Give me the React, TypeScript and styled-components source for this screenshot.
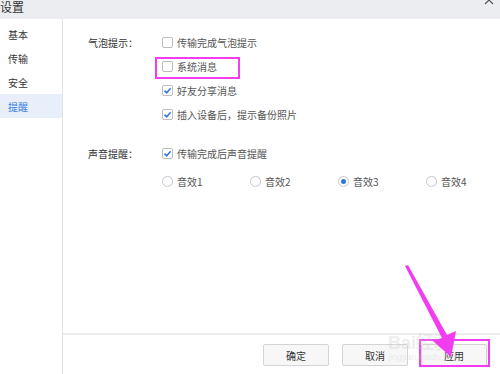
import React from 'react';
import { styled, createGlobalStyle } from 'styled-components';

const GlobalStyle = createGlobalStyle`
  html, body {
    margin: 0;
    padding: 0;
    background: #ffffff;
  }
  body {
    font-family: "Noto Sans CJK SC", "Noto Sans", sans-serif;
  }
`;

type CheckProps = { checked?: boolean };

function CheckBox({ checked }: CheckProps) {
  return (
    <Box>
      {checked && (
        <svg width="9" height="9" viewBox="0 0 9 9">
          <path d="M1.5 4.6 L3.7 6.8 L7.6 2.2" fill="none" stroke="#2f76e0" strokeWidth="1.5" />
        </svg>
      )}
    </Box>
  );
}

function Radio({ checked }: CheckProps) {
  return <RadioCircle>{checked && <RadioDot />}</RadioCircle>;
}

const bubbleItems = [
  { text: '传输完成气泡提示', checked: false },
  { text: '系统消息', checked: false },
  { text: '好友分享消息', checked: true },
  { text: '插入设备后，提示备份照片', checked: true },
];

const sounds = [
  { text: '音效1', checked: false },
  { text: '音效2', checked: false },
  { text: '音效3', checked: true },
  { text: '音效4', checked: false },
];

const menu = ['基本', '传输', '安全', '提醒'];

export default function App() {
  return (
    <Page>
      <GlobalStyle />
      <TitleBar>
        <Title>设置</Title>
        <CloseIcon width="10" height="10" viewBox="0 0 10 10">
          <path d="M1 1 L9 9 M9 1 L1 9" stroke="#555" strokeWidth="1.2" />
        </CloseIcon>
      </TitleBar>
      <Body>
        <Sidebar>
          {menu.map((m) => (
            <MenuItem key={m} $active={m === '提醒'}>
              {m}
            </MenuItem>
          ))}
        </Sidebar>
        <Main>
          <Content>
            <Section>
              <Label>气泡提示：</Label>
              <Options>
                {bubbleItems.map((it) => (
                  <Option key={it.text}>
                    <CheckBox checked={it.checked} />
                    <OptionText>{it.text}</OptionText>
                  </Option>
                ))}
              </Options>
            </Section>
            <Section $gap>
              <Label>声音提醒：</Label>
              <Options>
                <Option>
                  <CheckBox checked />
                  <OptionText>传输完成后声音提醒</OptionText>
                </Option>
                <RadioRow>
                  {sounds.map((s) => (
                    <RadioOption key={s.text}>
                      <Radio checked={s.checked} />
                      <OptionText>{s.text}</OptionText>
                    </RadioOption>
                  ))}
                </RadioRow>
              </Options>
            </Section>
          </Content>
          <Footer>
            <Button>确定</Button>
            <Button>取消</Button>
            <Button>应用</Button>
          </Footer>
        </Main>
      </Body>

      <Highlight $x={155} $y={57} $w={85} $h={22} />
      <Highlight $x={419} $y={339} $w={71} $h={28} />
      <Watermark>
        <WatermarkBig>Bai经验</WatermarkBig>
        <WatermarkSmall>jingyan.baidu.com</WatermarkSmall>
      </Watermark>
      <ArrowLayer width="500" height="374" viewBox="0 0 500 374">
        <polygon
          points="405,266 408,265 447,335 456,331 451,357 433,341 442,338"
          fill="#f23cf0"
        />
      </ArrowLayer>
    </Page>
  );
}

const Page = styled.div`
  position: relative;
  width: 500px;
  height: 374px;
  overflow: hidden;
  display: flex;
  flex-direction: column;
  background: #ffffff;
`;

const TitleBar = styled.div`
  height: 19px;
  flex-shrink: 0;
  display: flex;
  justify-content: space-between;
  align-items: flex-start;
  background: #ecedf1;
  padding: 0 6px 0 0;
`;

const Title = styled.div`
  font-size: 12px;
  line-height: 13px;
  color: #333333;
`;

const CloseIcon = styled.svg`
  margin-top: -5px;
`;

const Body = styled.div`
  flex: 1;
  display: flex;
  min-height: 0;
`;

const Sidebar = styled.div`
  width: 62px;
  flex-shrink: 0;
  border-right: 1px solid #e3e3e3;
  padding-top: 3px;
  display: flex;
  flex-direction: column;
`;

const MenuItem = styled.div<{ $active?: boolean }>`
  height: 24px;
  display: flex;
  align-items: center;
  padding-left: 8px;
  font-size: 10px;
  color: ${(p) => (p.$active ? '#3a7fe0' : '#333333')};
  background: ${(p) => (p.$active ? '#e8eefa' : 'transparent')};
`;

const Main = styled.div`
  flex: 1;
  min-width: 0;
  display: flex;
  flex-direction: column;
`;

const Content = styled.div`
  flex: 1;
  padding: 11px 0 0 25px;
`;

const Section = styled.div<{ $gap?: boolean }>`
  display: flex;
  margin-top: ${(p) => (p.$gap ? '15px' : '0')};
`;

const Label = styled.div`
  width: 74px;
  flex-shrink: 0;
  height: 24px;
  display: flex;
  align-items: center;
  font-size: 10px;
  color: #333333;
`;

const Options = styled.div`
  display: flex;
  flex-direction: column;
`;

const Option = styled.div`
  height: 24px;
  display: flex;
  align-items: center;
  gap: 4px;
`;

const OptionText = styled.span`
  font-size: 10px;
  color: #555555;
`;

const Box = styled.span`
  width: 9px;
  height: 9px;
  border: 1px solid #bcbcbc;
  border-radius: 2px;
  background: #ffffff;
  display: flex;
  align-items: center;
  justify-content: center;
`;

const RadioRow = styled.div`
  display: flex;
  margin-top: 4px;
  height: 24px;
`;

const RadioOption = styled.div`
  width: 88px;
  display: flex;
  align-items: center;
  gap: 4px;
`;

const RadioCircle = styled.span`
  width: 9px;
  height: 9px;
  border: 1px solid #c4c6cc;
  border-radius: 50%;
  display: flex;
  align-items: center;
  justify-content: center;
`;

const RadioDot = styled.span`
  width: 5px;
  height: 5px;
  border-radius: 50%;
  background: #2f76e0;
`;

const Footer = styled.div`
  height: 41px;
  flex-shrink: 0;
  border-top: 2px solid #ececec;
  display: flex;
  justify-content: flex-end;
  align-items: flex-start;
  gap: 13px;
  padding: 9px 13px 0 0;
  box-sizing: border-box;
`;

const Button = styled.div`
  width: 64px;
  height: 20px;
  border: 1px solid #d4d4d4;
  border-radius: 2px;
  background: #f7f7f7;
  display: flex;
  align-items: center;
  justify-content: center;
  font-size: 10px;
  color: #333333;
`;

const Highlight = styled.div<{ $x: number; $y: number; $w: number; $h: number }>`
  position: absolute;
  left: ${(p) => p.$x}px;
  top: ${(p) => p.$y}px;
  width: ${(p) => p.$w}px;
  height: ${(p) => p.$h}px;
  border: 2px solid #f23cf0;
  box-sizing: border-box;
  pointer-events: none;
`;

const Watermark = styled.div`
  position: absolute;
  left: 388px;
  top: 334px;
  display: flex;
  flex-direction: column;
  pointer-events: none;
  opacity: 0.3;
`;

const WatermarkBig = styled.span`
  font-family: "Liberation Sans", "Noto Sans CJK SC", sans-serif;
  font-size: 18px;
  font-weight: bold;
  line-height: 18px;
  color: #c9c9c9;
`;

const WatermarkSmall = styled.span`
  font-family: "Liberation Sans", sans-serif;
  font-size: 9px;
  line-height: 10px;
  color: #c9c9c9;
`;

const ArrowLayer = styled.svg`
  position: absolute;
  left: 0;
  top: 0;
  pointer-events: none;
`;
